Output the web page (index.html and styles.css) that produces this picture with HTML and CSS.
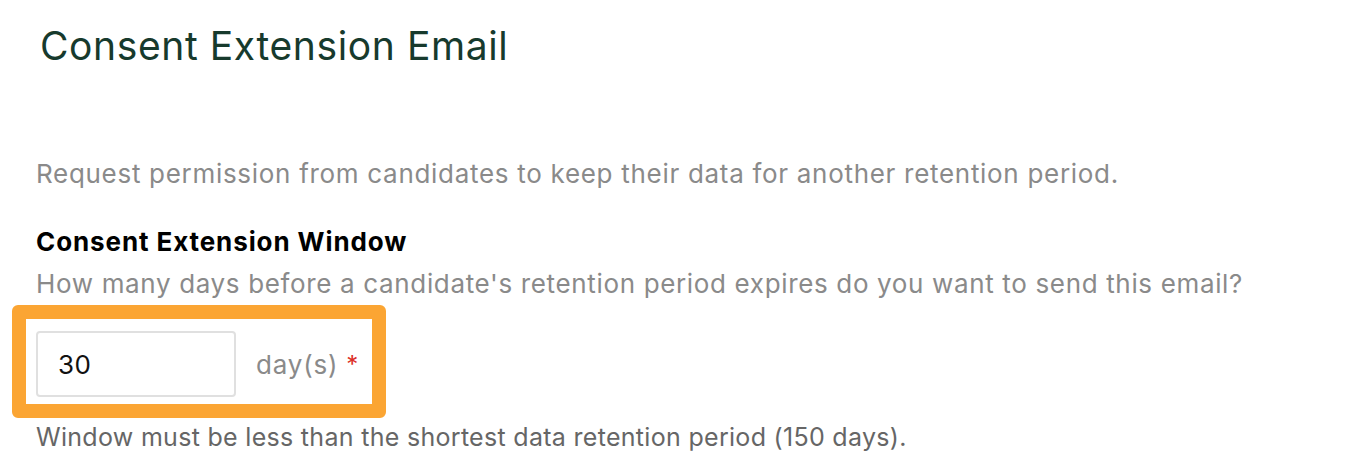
FILE: index.html
```html
<!DOCTYPE html>
<html lang="en">
<head>
    <meta charset="UTF-8">
    <meta name="viewport" content="width=device-width, initial-scale=1.0">
    <title>Consent Extension Email</title>
    <link rel="stylesheet" href="styles.css">
</head>
<body>
    <div class="page">
        <h1 class="page-title">Consent Extension Email</h1>

        <p class="intro">Request permission from candidates to keep their data for another retention period.</p>

        <div class="field">
            <div class="field-label">Consent Extension Window</div>
            <div class="field-hint">How many days before a candidate's retention period expires do you want to send this email?</div>

            <div class="highlight">
                <div class="input-row">
                    <input class="days-input" type="text" value="30">
                    <span class="unit">day(s)</span>
                    <span class="required">*</span>
                </div>
            </div>

            <div class="field-note">Window must be less than the shortest data retention period (150 days).</div>
        </div>
    </div>
</body>
</html>
```

FILE: styles.css
```css
body {
    margin: 0;
    background: #fff;
    font-family: Inter, "Liberation Sans", sans-serif;
}

.page {
    padding: 0 0 0 36px;
}

.page-title {
    margin: 0;
    padding: 23px 0 0 4px;
    font-size: 39px;
    font-weight: 400;
    line-height: 46px;
    letter-spacing: 0.6px;
    color: #173a2d;
}

.intro {
    margin: 89px 0 0;
    font-size: 26px;
    line-height: 32px;
    letter-spacing: 0.7px;
    color: #8a8a8a;
}

.field {
    margin-top: 36px;
}

.field-label {
    font-size: 26px;
    font-weight: 700;
    line-height: 32px;
    letter-spacing: 0.9px;
    color: #000;
}

.field-hint {
    margin-top: 10px;
    font-size: 26px;
    line-height: 32px;
    letter-spacing: 0.65px;
    color: #8a8a8a;
}

/* orange callout round the input */
.highlight {
    margin: 5px 0 0 -24px;
    border: 14px solid #fba533;
    border-radius: 6px;
    padding: 12px 0 7px 10px;
    width: 336px;
}

.input-row {
    display: flex;
    align-items: center;
}

.days-input {
    box-sizing: border-box;
    width: 200px;
    height: 66px;
    padding: 0 20px;
    border: 2px solid #e0e0e0;
    border-radius: 4px;
    font-family: Inter, "Liberation Sans", sans-serif;
    font-size: 26px;
    letter-spacing: 0.5px;
    color: #111;
    outline: none;
}

.unit {
    margin-left: 20px;
    font-size: 26px;
    letter-spacing: 0.8px;
    color: #8a8a8a;
}

.required {
    margin-left: 8px;
    font-size: 24px;
    color: #dc2f26;
}

.field-note {
    margin-top: 3px;
    font-size: 25px;
    line-height: 32px;
    letter-spacing: 0.3px;
    color: #666;
}
```
